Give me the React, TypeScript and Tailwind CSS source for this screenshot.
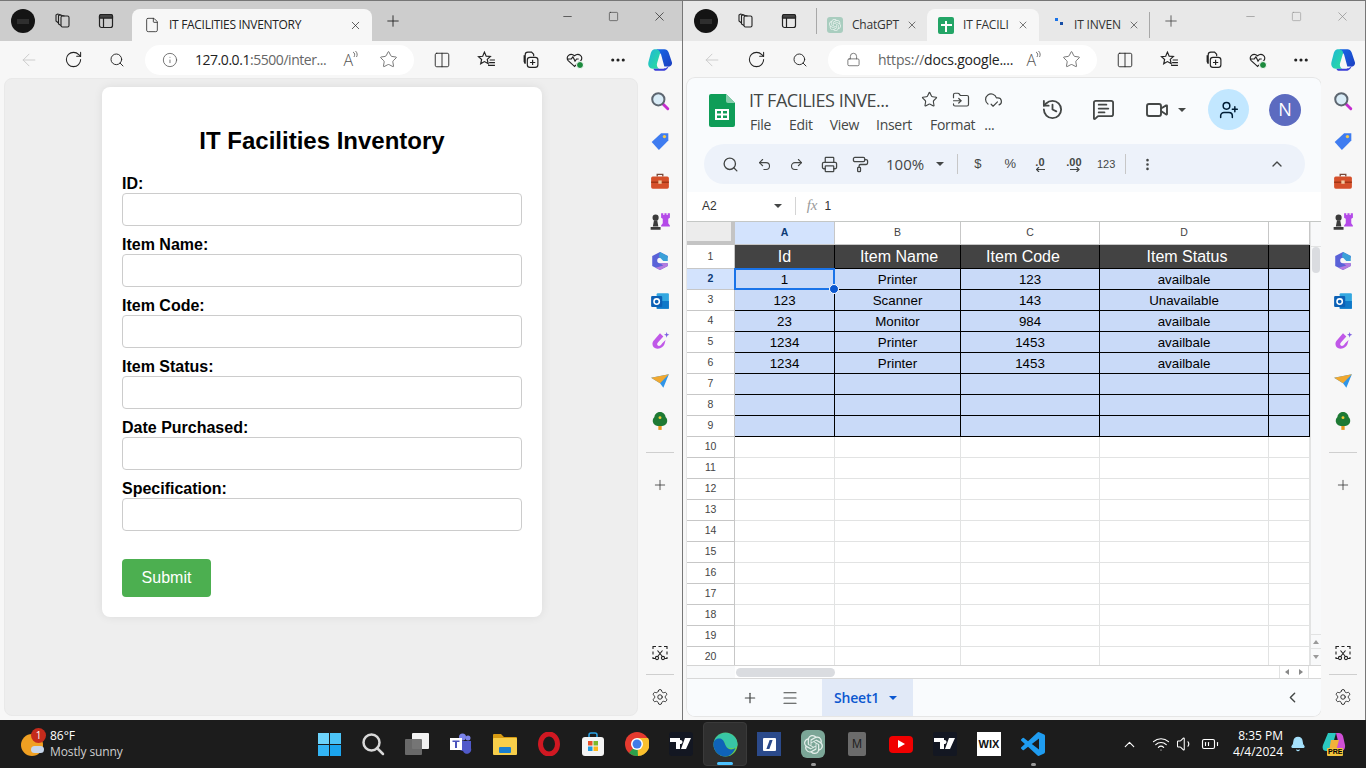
import React from "react";
import {
  ArrowLeft, RotateCw, Search, Info, Lock, Star, X, Plus, Minus, Square, Ellipsis, Columns2,
  Undo2, Redo2, Printer, PaintRoller, History, MessageSquareText, Video, UserPlus, MoreVertical, ChevronUp,
  ChevronLeft, Menu, FolderInput, CloudCheck, Settings, File, Wifi, Volume1, BatteryMedium, Bell,
} from "lucide-react";
import { SiOpenai } from "react-icons/si";

const ui = "font-['Open_Sans','Noto_Sans',sans-serif]";
const arial = "font-['Liberation_Sans',Arial,sans-serif]";

function Avatar() {
  return (
    <div className="w-6 h-6 rounded-full bg-[#141414] flex items-center justify-center ml-[11px]">
      <div className="w-3 h-[5px] bg-[#2e2e2e]" />
    </div>
  );
}

function Workspaces() {
  return (
    <svg width="18" height="18" viewBox="0 0 18 18" fill="none" stroke="#222" strokeWidth="1.1">
      <rect x="7" y="4" width="8" height="11" rx="1.5" />
      <path d="M7 13.5 4.5 12V3.5L5.5 3l5 1M4.5 11 2 9V3l1.5-1 4 1" />
    </svg>
  );
}

function TabsIcon() {
  return (
    <svg width="16" height="16" viewBox="0 0 16 16" fill="none" stroke="#222" strokeWidth="1.2">
      <rect x="1.5" y="1.5" width="13" height="13" rx="2" />
      <path d="M1.5 5h13M5.5 5v9.5" />
      <path d="M1.5 5h13V3a1.5 1.5 0 0 0-1.5-1.5H3A1.5 1.5 0 0 0 1.5 3z" fill="#444" />
    </svg>
  );
}

function SheetsFavicon() {
  return (
    <div className="w-4 h-[17px] rounded-[2px] bg-[#23a566] flex items-center justify-center relative">
      <div className="w-[11px] h-[2px] bg-white" />
      <div className="w-[2px] h-[11px] bg-white absolute top-[4px]" />
    </div>
  );
}

function WinControls({ dim }: { dim?: boolean }) {
  const c = dim ? "#8a8a8a" : "#222";
  return (
    <div className="ml-auto flex h-[28px] items-center">
      <div className="w-[46px] flex justify-center"><Minus size={13} color={c} strokeWidth={1.2} /></div>
      <div className="w-[46px] flex justify-center"><Square size={11} color={c} strokeWidth={1.2} /></div>
      <div className="w-[46px] flex justify-center"><X size={15} color={c} strokeWidth={1.1} /></div>
    </div>
  );
}

function CopilotLogo() {
  return (
    <svg width="26" height="26" viewBox="0 0 24 24">
      <defs>
        <linearGradient id="cp1" x1="0" y1="0" x2="1" y2="1"><stop offset="0" stopColor="#1fb6d8" /><stop offset="1" stopColor="#2be09a" /></linearGradient>
        <linearGradient id="cp2" x1="0" y1="0" x2="1" y2="1"><stop offset="0" stopColor="#1767e8" /><stop offset="1" stopColor="#1d3fc0" /></linearGradient>
      </defs>
      <path d="M9 2h7c2 0 3 1 4 3l3 9c.6 2-1 4-3 4h-4L13 7c-.5-1.6-2-2-4-2z" fill="url(#cp2)" />
      <path d="M8 2C5 2 4 4 3.400 6L1.300 14c-.7 3 1 6 4 6h6c-2-1-2.600-3-2-5L12 6c.4-1.500-1-4-4-4z" fill="url(#cp1)" />
      <path d="M15 22H9c-2 0-3-1-3-2h9c2 0 5-1 6-5-1 4-3 7-6 7z" fill="#3b3fd8" />
    </svg>
  );
}

function Toolbar({ address }: { address: React.ReactNode }) {
  const slot = "w-[44px] flex justify-center items-center";
  return (
    <div className="h-[37px] bg-[#f7f7f7] flex items-center pl-[7px]">
      <div className={slot}><ArrowLeft size={20} color="#c8c8c8" strokeWidth={1.1} /></div>
      <div className={slot}><RotateCw size={19} color="#222" strokeWidth={1.3} /></div>
      <div className={slot}><Search size={16} color="#222" strokeWidth={1.4} /></div>
      <div className="ml-[6px] w-[269px] h-[30px] rounded-full bg-white flex items-center">{address}
        <div className="w-[28px] flex justify-center relative">
          <span className={`${ui} text-[16px] text-[#555] font-light`}>A</span>
          <svg width="6" height="8" viewBox="0 0 6 8" fill="none" stroke="#555" strokeWidth=".8" className="absolute right-[4px] top-[3px]"><path d="M1 1c2 1 2 3 1 5M3.500 0c2 2 2 4 1 6" /></svg>
        </div>
        <div className="w-[52px] flex justify-center"><Star size={19} color="#555" strokeWidth={1} /></div>
      </div>
      <div className={`${slot} ml-[6px]`}><Columns2 size={18} color="#222" strokeWidth={1.2} /></div>
      <div className={slot}>
        <svg width="19" height="19" viewBox="0 0 18 18" fill="none" stroke="#222" strokeWidth="1.1"><path d="M7 2l1.700 3.800 4 .4-3 2.700.9 4L7 11l-3.500 2 .9-4-3-2.700 4-.4zM12 9.500h5M11.500 12h5.500M10.500 14.500h6.500" /></svg>
      </div>
      <div className={slot}>
        <svg width="19" height="19" viewBox="0 0 18 18" fill="none" stroke="#222" strokeWidth="1.1"><path d="M4 13V4.500A2.500 2.500 0 0 1 6.500 2H10l2 2v2M4 13l-1-2V5" /><rect x="6" y="7" width="10" height="9.500" rx="2.500" /><path d="M11 9.300v5M8.500 11.800h5" /></svg>
      </div>
      <div className={`${slot} relative`}>
        <svg width="19" height="19" viewBox="0 0 18 18" fill="none" stroke="#222" strokeWidth="1.1"><path d="M9 15.500 3 10c-3-3.500 2-8 6-4.500C13 2 18 6.500 15 10L9 15.500zM2.500 8.500h3.500l1.500-2 2 4 1.500-2h2" /></svg>
        <div className="absolute w-[8px] h-[8px] rounded-full bg-[#1c8a3d] left-[24px] top-[11px] border border-white" />
      </div>
      <div className={slot}><Ellipsis size={18} color="#222" strokeWidth={2.200} /></div>
      <div className="w-[40px] flex justify-center"><CopilotLogo /></div>
    </div>
  );
}

function SideIcons() {
  const s = "h-[40px] w-full flex items-center justify-center";
  return (
    <>
      <div className={s}>
        <svg width="20" height="20" viewBox="0 0 18 18"><path d="M11 11l5 5" stroke="#c42ccf" strokeWidth="2.600" strokeLinecap="round" /><circle cx="7.500" cy="7.500" r="5.500" fill="#d9ecf7" stroke="#5d6670" strokeWidth="1.800" /></svg>
      </div>
      <div className={s}>
        <svg width="20" height="20" viewBox="0 0 18 18"><path d="M1.500 10 10 2h6.500v6.500L8 17z" fill="#3f7cf0" /><circle cx="13" cy="5" r="1.500" fill="#f4c84a" /></svg>
      </div>
      <div className={s}>
        <svg width="20" height="20" viewBox="0 0 18 18"><path d="M6.500 5V3h5v2" fill="none" stroke="#7a4a3a" strokeWidth="1.200" /><rect x="1" y="5" width="16" height="11" rx="1.500" fill="#d5502a" /><rect x="1" y="9.500" width="16" height="1.200" fill="#9c3414" /><rect x="7.500" y="8.500" width="3" height="3" fill="#f1c9a0" /></svg>
      </div>
      <div className={s}>
        <svg width="22" height="20" viewBox="0 0 20 18"><path d="M11 2h2v1.500h1V2h2v1.500h1V2h2v4l-1.500 1v4l1.500 2v1H11v-1l1.500-2V7L11 6z" fill="#b44ae8" /><circle cx="6" cy="6" r="2.800" fill="#3b3b3b" /><path d="M4.500 8.500h3L8.500 14h-5zM1.500 14.500h9V17h-9z" fill="#3b3b3b" /></svg>
      </div>
      <div className={s}>
        <svg width="20" height="20" viewBox="0 0 18 18"><path d="M9 1 2 4.500v9L9 17l7-3.500V11H9a2.500 2.500 0 0 1 0-5h7V4.500z" fill="#5a62d8" /><path d="M9 11h7v2.500L9 17l-4-2 7-2z" fill="#b57bdf" /><path d="M9 1l7 3.500V9h-4L8 5z" fill="#3aa0d8" /></svg>
      </div>
      <div className={s}>
        <svg width="20" height="20" viewBox="0 0 18 18"><rect x="6" y="2" width="11" height="14" rx="1" fill="#32a7e0" /><path d="M6 9h11v7H6z" fill="#0f78c8" /><rect x="1" y="4.500" width="10" height="10" rx="1" fill="#0b60b5" /><circle cx="6" cy="9.500" r="2.400" fill="none" stroke="#fff" strokeWidth="1.400" /></svg>
      </div>
      <div className={s}>
        <svg width="20" height="20" viewBox="0 0 18 18"><path d="M9 2 3 9c-2 3 0 7 4 7 3 0 5-2 6-4l1-4-3 3c-1 2-3 3-4 2-1-.5-.5-2 .5-3L12 5z" fill="#c058e8" /><path d="M15 1l.6 1.800 1.800.6-1.800.6L15 6l-.6-2-1.800-.6 1.800-.6z" fill="#7a5ce0" /></svg>
      </div>
      <div className={s}>
        <svg width="20" height="20" viewBox="0 0 18 18"><path d="M1 6 17 3l-5 12-3-4z" fill="#2f95e8" /><path d="M1 6l16-3-8 8z" fill="#f0a830" /></svg>
      </div>
      <div className={s}>
        <svg width="20" height="20" viewBox="0 0 18 18"><rect x="7.500" y="12" width="3" height="5" fill="#e89a20" /><path d="M9 1c-3 0-5 2.500-5 4.500C2.500 7 2 9 3 11c1 2 3 2.500 6 2.500s5-.5 6-2.500c1-2 .5-4-1-5.500C14 3.500 12 1 9 1z" fill="#1e7a34" /><circle cx="9" cy="6" r="1.300" fill="#f0c93a" /></svg>
      </div>
    </>
  );
}

function Sidebar() {
  return (
    <div className="flex-1 bg-[#f7f7f7] flex flex-col items-center pt-[3px] pr-[1px]">
      <SideIcons />
      <div className="w-[28px] h-px bg-[#cfcfcf] mt-[11px]" />
      <div className="h-[64px] flex items-center"><Plus size={16} color="#333" strokeWidth={1.2} /></div>
      <div className="mt-auto flex flex-col items-center pb-[14px]">
        <svg width="18" height="18" viewBox="0 0 18 18" fill="none" stroke="#222" strokeWidth="1.100" className="mb-[12px]"><path d="M2 5V2.500h3M7.500 2.500h3M13 2.500h3V5M2 7.500v3M16 7.500v3M2 13v1.500h2M14 14.500h2V13" /><path d="M6.500 6.500 11 12M11.500 6.500 7 12" /><circle cx="6" cy="14" r="1.600" /><circle cx="12" cy="14" r="1.600" /></svg>
        <div className="w-[28px] h-px bg-[#cfcfcf] mb-[13px]" />
        <Settings size={18} color="#222" strokeWidth={1.2} />
      </div>
    </div>
  );
}

function LeftTabs() {
  return (
    <div className="h-[40px] bg-[#cdcdcd] flex items-end">
      <div className="h-full flex items-center">
        <Avatar />
        <div className="w-[39px] ml-[8px] flex justify-center"><Workspaces /></div>
        <div className="w-[44px] ml-[2px] flex justify-center"><TabsIcon /></div>
      </div>
      <div className="ml-[4px] w-[240px] h-[32px] bg-[#f7f7f7] rounded-t-[8px] flex items-center pl-[12px]">
        <File size={16} color="#222" strokeWidth={1.2} />
        <span className={`${ui} ml-[9px] text-[12px] text-[#222] tracking-[-0.3px]`}>IT FACILITIES INVENTORY</span>
        <X size={13} color="#222" strokeWidth={1.3} className="ml-auto mr-[10px]" />
      </div>
      <div className="h-full flex-1 flex items-center">
        <Plus size={18} color="#222" strokeWidth={1.2} className="ml-[12px]" />
        <div className="ml-auto self-start pt-[1px]"><WinControls /></div>
      </div>
    </div>
  );
}

function RightTabs() {
  const label = `${ui} text-[12px] text-[#333] tracking-[-0.2px]`;
  return (
    <div className="h-[40px] bg-[#e8e8e8] flex items-end">
      <div className="h-full flex items-center">
        <Avatar />
        <div className="w-[39px] ml-[8px] flex justify-center"><Workspaces /></div>
        <div className="w-[44px] ml-[2px] flex justify-center"><TabsIcon /></div>
        <div className="ml-[5px] w-px h-[26px] bg-[#a8a8a8]" />
      </div>
      <div className="h-[32px] w-[110px] flex items-center pl-[10px]">
        <div className="w-4 h-4 rounded-[3px] bg-[#a9cdbf] flex items-center justify-center"><SiOpenai size={12} color="#e8f2ee" /></div>
        <span className={`${label} ml-[9px]`}>ChatGPT</span>
        <X size={12} color="#333" strokeWidth={1.3} className="ml-[7px]" />
      </div>
      <div className="h-[32px] w-[112px] bg-[#f7f7f7] rounded-t-[8px] flex items-center pl-[11px]">
        <SheetsFavicon />
        <span className={`${label} ml-[9px] w-[47px] whitespace-nowrap`}>IT FACILI</span>
        <X size={12} color="#333" strokeWidth={1.3} className="ml-[7px]" />
      </div>
      <div className="h-[32px] w-[111px] shrink-0 flex items-center pl-[14px]">
        <div className="w-4 h-4 relative shrink-0">
          <div className="absolute w-[3px] h-[3px] bg-[#1a73e8] left-[2px] top-[1px]" />
          <div className="absolute w-[3px] h-[3px] bg-[#174ea6] left-[7px] top-[5px]" />
        </div>
        <span className={`${label} ml-[5px] w-[52px] shrink-0 whitespace-nowrap`}>IT INVEN</span>
        <X size={12} color="#333" strokeWidth={1.3} className="ml-[2px] shrink-0" />
        <div className="ml-[9px] w-px h-[26px] bg-[#a8a8a8] shrink-0" />
      </div>
      <div className="h-full flex-1 flex items-center">
        <Plus size={18} color="#444" strokeWidth={1.1} className="ml-[12px]" />
        <div className="ml-auto self-start pt-[1px]"><WinControls dim /></div>
      </div>
    </div>
  );
}

function Field({ label }: { label: string }) {
  return (
    <div className="mb-[9px]">
      <div className={`${arial} text-[16px] leading-[19px] font-bold text-black`}>{label}</div>
      <div className="h-[33px] w-[400px] bg-white border border-[#cccccc] rounded-[4px]" />
    </div>
  );
}

function FormPanel() {
  return (
    <div className="w-[634px] ml-[4px] h-[638px] bg-[#eeeeee] rounded-[8px] border border-[#e9e9e9] pt-[8px] pl-[97px]">
      <div className="w-[440px] h-[530px] bg-white rounded-[8px] shadow-[0_0_10px_rgba(0,0,0,0.08)] pt-[40px] px-[20px]">
        <div className={`${arial} text-[24px] leading-[27px] font-bold text-center text-black mb-[20px]`}>IT Facilities Inventory</div>
        {["ID:", "Item Name:", "Item Code:", "Item Status:", "Date Purchased:", "Specification:"].map((l) => <Field key={l} label={l} />)}
        <div className={`${arial} mt-[28px] w-[89px] h-[38px] bg-[#4caf50] rounded-[4px] text-white text-[16px] flex items-center justify-center`}>Submit</div>
      </div>
    </div>
  );
}

function SheetsHeader() {
  const menu = `${ui} text-[14px] text-[#444746] tracking-[-0.3px]`;
  return (
    <div className="h-[66px] flex items-start">
      <svg width="26" height="33" viewBox="0 0 26 33" className="ml-[22px] mt-[16px]">
        <path d="M2 0h15l9 9v22a2 2 0 0 1-2 2H2a2 2 0 0 1-2-2V2a2 2 0 0 1 2-2z" fill="#0f9d58" />
        <path d="M17 0l9 9h-7a2 2 0 0 1-2-2z" fill="#87ceac" />
        <path d="M6 15h14v11H6zM8 17v2.500h4V17zm6 0v2.500h4V17zm-6 4.500V24h4v-2.500zm6 0V24h4v-2.500z" fill="#fff" fillRule="evenodd" />
      </svg>
      <div className="ml-[14px] mt-[10px] w-[170px]">
        <div className={`${ui} text-[18px] leading-[24px] text-[#444746] tracking-[-0.5px] whitespace-nowrap`}>IT FACILIES INVE...</div>
        <div className="flex mt-[3px] leading-[20px] whitespace-nowrap">
          <span className={`${menu} ml-px`}>File</span>
          <span className={`${menu} ml-[18px]`}>Edit</span>
          <span className={`${menu} ml-[17px]`}>View</span>
          <span className={`${menu} ml-[17px]`}>Insert</span>
          <span className={`${menu} ml-[18px]`}>Format</span>
          <span className={`${menu} ml-[9px]`}>...</span>
        </div>
      </div>
      <div className="flex items-center mt-[12px]">
        <Star size={17} color="#444746" strokeWidth={1.6} className="ml-[2px]" />
        <FolderInput size={18} color="#444746" strokeWidth={1.6} className="ml-[14px]" />
        <CloudCheck size={19} color="#444746" strokeWidth={1.5} className="ml-[14px]" />
      </div>
      <div className="flex items-center mt-[11px] h-[41px]">
        <History size={23} color="#444746" strokeWidth={1.9} className="ml-[38px]" />
        <MessageSquareText size={23} color="#444746" strokeWidth={1.9} className="ml-[28px]" />
        <Video size={24} color="#444746" strokeWidth={1.9} className="ml-[30px]" />
        <div className="ml-[9px] w-0 h-0 border-x-[4px] border-x-transparent border-t-[4px] border-t-[#444746]" />
        <div className="ml-[22px] w-[41px] h-[41px] rounded-full bg-[#c2e7ff] flex items-center justify-center"><UserPlus size={20} color="#001d35" strokeWidth={1.8} /></div>
        <div className={`${ui} ml-[20px] w-8 h-8 rounded-full bg-[#5c6bc0] text-white text-[18px] flex items-center justify-center`}>N</div>
      </div>
    </div>
  );
}

function Caret({ className }: { className?: string }) {
  return <div className={`w-0 h-0 border-x-[4px] border-x-transparent border-t-[4px] border-t-[#444746] ${className ?? ""}`} />;
}

function SheetsToolbar() {
  const t = `${arial} text-[#444746]`;
  return (
    <div className="ml-[17px] w-[601px] h-[40px] rounded-full bg-[#edf2fa] flex items-center">
      <Search size={17} color="#444746" strokeWidth={1.9} className="ml-[18px]" />
      <Undo2 size={15} color="#444746" strokeWidth={1.7} className="ml-[18px]" />
      <Redo2 size={15} color="#444746" strokeWidth={1.7} className="ml-[17px]" />
      <Printer size={17} color="#444746" strokeWidth={1.8} className="ml-[17px]" />
      <PaintRoller size={17} color="#444746" strokeWidth={1.8} className="ml-[14px]" />
      <span className={`${ui} text-[15px] text-[#444746] ml-[17px]`}>100%</span>
      <Caret className="ml-[12px]" />
      <div className="ml-[13px] w-px h-[20px] bg-[#c7c7c7]" />
      <span className={`${t} text-[13px] ml-[16px]`}>$</span>
      <span className={`${t} text-[13px] ml-[23px]`}>%</span>
      <div className="ml-[15px] w-[18px] flex flex-col items-center leading-none">
        <span className={`${t} text-[11px] font-bold leading-[10px]`}>.0</span>
        <svg width="10" height="5" viewBox="0 0 10 5" className="ml-[3px]"><path d="M0 2.500h9M3 0 .5 2.500 3 5" stroke="#444746" fill="none" strokeWidth="1.200" /></svg>
      </div>
      <div className="ml-[13px] w-[24px] flex flex-col items-center leading-none">
        <span className={`${t} text-[11px] font-bold leading-[10px]`}>.00</span>
        <svg width="10" height="5" viewBox="0 0 10 5" className="ml-[3px]"><path d="M0 2.500h9M6.500 0 9 2.500 6.500 5" stroke="#444746" fill="none" strokeWidth="1.200" /></svg>
      </div>
      <span className={`${t} text-[11px] ml-[11px]`}>123</span>
      <div className="ml-[10px] w-px h-[20px] bg-[#c7c7c7]" />
      <MoreVertical size={15} color="#444746" strokeWidth={2.2} className="ml-[14px]" />
      <ChevronUp size={16} color="#444746" strokeWidth={2} className="ml-auto mr-[20px]" />
    </div>
  );
}

function FormulaBar() {
  return (
    <div className="h-[29px] bg-white flex items-center mt-[8px] pb-[2px]">
      <span className={`${arial} text-[12px] text-[#333] ml-[15px]`}>A2</span>
      <Caret className="ml-[57px]" />
      <div className="ml-[13px] w-px h-[18px] bg-[#d4d4d4]" />
      <span className="font-['Liberation_Serif',serif] italic text-[15px] text-[#9a9a9a] ml-[11px]">fx</span>
      <span className={`${arial} text-[12px] text-[#333] ml-[7px]`}>1</span>
    </div>
  );
}

const rows: string[][] = [
  ["1", "Printer", "123", "availbale"],
  ["123", "Scanner", "143", "Unavailable"],
  ["23", "Monitor", "984", "availbale"],
  ["1234", "Printer", "1453", "availbale"],
  ["1234", "Printer", "1453", "availbale"],
  ["", "", "", ""],
  ["", "", "", ""],
  ["", "", "", ""],
];

function RowHead({ n, sel, tall }: { n: number; sel?: boolean; tall?: boolean }) {
  return (
    <div className={`${arial} ${tall ? "h-[24px]" : "h-[21px]"} ${sel ? "bg-[#d3e3fd] font-bold text-[#0b3a75]" : "bg-white text-[#444]"} border-r border-b border-[#c7c7c7] text-[10.500px] flex items-center justify-center`}>
      {n}
    </div>
  );
}

function Grid() {
  const widths = ["w-[100px]", "w-[126px]", "w-[139px]", "w-[169px]", "w-[41px]"];
  const heads = ["A", "B", "C", "D", ""];
  const hdr = ["Id", "Item Name", "Item Code", "Item Status", ""];
  const hdrPad = ["", "pl-[3px]", "pr-[14px]", "pl-[6px]", ""];
  return (
    <div className="h-[444px] overflow-hidden flex border-t border-[#c4c7c5]">
      <div className="w-[623px] shrink-0">
        <div className="flex h-[23px]">
          <div className="w-[48px] bg-[#ececec] border-r-[4px] border-b-[4px] border-[#c4c4c4]" />
          {heads.map((h, i) => (
            <div key={i} className={`${widths[i]} ${arial} ${i === 0 ? "bg-[#d3e3fd] font-bold text-[#0b3a75]" : "bg-white text-[#444]"} border-r border-b border-[#c7c7c7] text-[10.500px] flex items-center justify-center`}>{h}</div>
          ))}
        </div>
        <div className="flex h-[24px]">
          <div className="w-[48px]"><RowHead n={1} tall /></div>
          {hdr.map((h, i) => (
            <div key={i} className={`${widths[i]} ${hdrPad[i]} ${arial} bg-[#434343] text-white text-[16px] border-r border-b border-black flex items-center justify-center`}>{h}</div>
          ))}
        </div>
        {rows.map((r, ri) => (
          <div key={ri} className="flex h-[21px]">
            <div className="w-[48px]"><RowHead n={ri + 2} sel={ri === 0} /></div>
            {[...r, ""].map((c, i) => (
              <div key={i} className={`${widths[i]} ${arial} ${ri === 0 && i === 0 ? "z-10" : ""} relative bg-[#c9daf8] text-black text-[13.330px] pt-[2px] border-r border-b border-black flex items-center justify-center`}>
                {c}
                {ri === 0 && i === 0 && (
                  <div className="absolute -left-px -top-px w-[101px] h-[22px] border-2 border-[#1a73e8]">
                    <div className="absolute -right-[6px] -bottom-[6px] w-[10px] h-[10px] rounded-full bg-[#0b57d0] border border-white" />
                  </div>
                )}
              </div>
            ))}
          </div>
        ))}
        {Array.from({ length: 11 }).map((_, ri) => (
          <div key={ri} className="flex h-[21px]">
            <div className="w-[48px]"><RowHead n={ri + 10} /></div>
            {widths.map((w, i) => <div key={i} className={`${w} bg-white border-r border-b border-[#e2e3e3]`} />)}
          </div>
        ))}
      </div>
      <div className="w-[11px] bg-[#f8f9fa] border-l border-[#e2e3e3] flex flex-col">
        <div className="h-[25px] shrink-0 border-b border-[#e2e3e3]" />
        <div className="w-[8px] h-[26px] ml-px bg-[#dadce0] rounded-[4px]" />
        <div className="mt-auto h-[15px] flex items-center justify-center border-y border-[#e2e3e3]"><div className="w-0 h-0 border-x-[3px] border-x-transparent border-b-[4px] border-b-[#9a9a9a]" /></div>
        <div className="h-[16px] flex items-center justify-center"><div className="w-0 h-0 border-x-[3px] border-x-transparent border-t-[4px] border-t-[#9a9a9a]" /></div>
      </div>
    </div>
  );
}

function SheetsBottom() {
  return (
    <>
      <div className="h-[13px] bg-white border-t border-[#d4d4d4] flex items-center">
        <div className="w-[48px] h-full bg-[#f8f9fa]" />
        <div className="ml-[1px] w-[99px] h-[9px] rounded-full bg-[#dadce0]" />
        <div className="ml-auto w-[30px] h-full border-x border-[#e2e3e3] flex items-center justify-around mr-[12px]">
          <div className="w-0 h-0 border-y-[3px] border-y-transparent border-r-[4px] border-r-[#888]" />
          <div className="w-0 h-0 border-y-[3px] border-y-transparent border-l-[4px] border-l-[#888]" />
        </div>
      </div>
      <div className="flex-1 bg-[#f9fbfd] border-t border-[#d8d8d8] flex items-stretch">
        <Plus size={16} color="#444746" strokeWidth={1.8} className="ml-[55px] self-center" />
        <Menu size={18} color="#444746" strokeWidth={1.6} className="ml-[23px] self-center" />
        <div className={`${ui} ml-[23px] w-[91px] bg-[#e1e9f7] text-[#0b57d0] text-[14px] font-semibold flex items-center pl-[12px] tracking-[-0.2px]`}>
          Sheet1
          <Caret className="ml-[10px] !border-t-[#0b57d0]" />
        </div>
        <ChevronLeft size={17} color="#444746" strokeWidth={2} className="ml-[371px] self-center" />
      </div>
    </>
  );
}

function SheetsPanel() {
  return (
    <div className="w-[634px] ml-[4px] h-[638px] rounded-[8px] overflow-hidden bg-[#f9fbfd] shadow-[0_0_0_1px_#e6e6e6] flex flex-col">
      <SheetsHeader />
      <SheetsToolbar />
      <FormulaBar />
      <Grid />
      <SheetsBottom />
    </div>
  );
}

function Window({ tabs, address, panel }: { tabs: React.ReactNode; address: React.ReactNode; panel: React.ReactNode }) {
  return (
    <div className="w-[683px] h-[720px] border-t border-[#767676] bg-[#f7f7f7] border-r border-r-[#777] flex flex-col overflow-hidden">
      {tabs}
      <Toolbar address={address} />
      <div className="flex flex-1">
        {panel}
        <Sidebar />
      </div>
    </div>
  );
}

function TvLogo({ w = 22 }: { w?: number }) {
  return (
    <svg width={w} height="14" viewBox="0 0 22 14" fill="#fff"><path d="M0 1h10v11H6V5H0zM12.500 5a2 2 0 1 1 0-.01zM15 1h6l-5 11h-5z" /></svg>
  );
}

function TaskIcon({ children, dot, active }: { children: React.ReactNode; dot?: boolean; active?: boolean }) {
  return (
    <div className={`w-[44px] h-[44px] flex items-center justify-center relative rounded-[4px] ${active ? "bg-[#2f2f2f] border border-[#3a3a3a]" : ""}`}>
      {children}
      {dot && <div className="absolute bottom-0 w-[5px] h-[3px] rounded-full bg-[#9a9a9a]" />}
      {active && <div className="absolute bottom-0 w-[16px] h-[3px] rounded-full bg-[#4cc2ff]" />}
    </div>
  );
}

function Taskbar() {
  return (
    <div className="h-[48px] bg-[#1c1c1c] flex items-center">
      <div className="w-[307px] shrink-0 flex items-center">
        <div className="ml-[21px] relative w-[24px] h-[24px]">
          <div className="w-[22px] h-[22px] rounded-full bg-[#f0a022] mt-[2px]" />
          <div className="absolute right-[1px] bottom-[3px] w-[13px] h-[7px] rounded-full bg-[#c7d6ea]" />
          <div className={`${ui} absolute left-[10px] -top-[4px] w-[15px] h-[15px] rounded-full bg-[#c42b1c] text-white text-[10px] flex items-center justify-center`}>1</div>
        </div>
        <div className={`${ui} ml-[5px] leading-[16px] text-[12px] text-white`}>
          <div>86°F</div>
          <div className="text-[#cfcfcf] tracking-[-0.1px]">Mostly sunny</div>
        </div>
      </div>
      <div className="flex items-center">
        <TaskIcon>
          <div className="grid grid-cols-2 gap-[1px] w-[23px] h-[23px]">
            <div className="bg-[#6cd3fb]" /><div className="bg-[#4cc4f8]" /><div className="bg-[#33b5f5]" /><div className="bg-[#1ba5ef]" />
          </div>
        </TaskIcon>
        <TaskIcon>
          <svg width="24" height="24" viewBox="0 0 24 24" fill="none"><circle cx="10.500" cy="10.500" r="8" stroke="#d8d8d8" strokeWidth="2.500" /><path d="M16 16l6 6" stroke="#d8d8d8" strokeWidth="2.500" strokeLinecap="round" /></svg>
        </TaskIcon>
        <TaskIcon>
          <div className="relative w-[24px] h-[22px]">
            <div className="absolute right-0 top-0 w-[17px] h-[16px] bg-[#f2f2f2] rounded-[1px]" />
            <div className="absolute left-0 bottom-0 w-[17px] h-[16px] bg-[#6e6e6e]/95 rounded-[1px]" />
          </div>
        </TaskIcon>
        <TaskIcon>
          <svg width="24" height="24" viewBox="0 0 24 24"><circle cx="19" cy="6" r="2.500" fill="#7b83eb" /><circle cx="13.500" cy="5" r="3.500" fill="#7b83eb" /><path d="M9 9h13v7a4 4 0 0 1-8 3c-3 0-5-3-5-6z" fill="#5059c9" /><rect x="1" y="6" width="12" height="12" fill="#fff" /><path d="M3.500 8.500h7V10H8v6H6v-6H3.500z" fill="#4b53bc" /></svg>
        </TaskIcon>
        <TaskIcon>
          <svg width="24" height="22" viewBox="0 0 24 22"><path d="M0 2a1 1 0 0 1 1-1h7l3 3h12a1 1 0 0 1 1 1v2H0z" fill="#d69a12" /><rect x="0" y="5" width="24" height="17" rx="1" fill="#f7ce4a" /><rect x="6" y="14" width="12" height="6" rx="1" fill="#1a7fd0" /></svg>
        </TaskIcon>
        <TaskIcon>
          <svg width="22" height="24" viewBox="0 0 22 24"><ellipse cx="11" cy="12" rx="8.500" ry="10" fill="none" stroke="#d01822" strokeWidth="5" /></svg>
        </TaskIcon>
        <TaskIcon>
          <svg width="22" height="24" viewBox="0 0 22 24"><path d="M7 6V3a2 2 0 0 1 2-2h4a2 2 0 0 1 2 2v3" fill="none" stroke="#2aa3e6" strokeWidth="1.500" /><rect x="0" y="5" width="22" height="19" rx="3" fill="#f4f4f4" /><rect x="6" y="9" width="4.500" height="4.500" fill="#e8502a" /><rect x="11.500" y="9" width="4.500" height="4.500" fill="#7cb82a" /><rect x="6" y="14.500" width="4.500" height="4.500" fill="#1e9ae0" /><rect x="11.500" y="14.500" width="4.500" height="4.500" fill="#fbb81a" /></svg>
        </TaskIcon>
        <TaskIcon>
          <svg width="24" height="24" viewBox="0 0 24 24"><circle cx="12" cy="12" r="12" fill="#e53a2f" /><path d="M12 12 22.400 18A12 12 0 0 1 4 21z" fill="#2ba14b" /><path d="M12 6h11a12 12 0 0 1-10 18z" fill="#fbc02d" /><circle cx="12" cy="12" r="6" fill="#fff" /><circle cx="12" cy="12" r="4.500" fill="#3f7be8" /></svg>
        </TaskIcon>
        <TaskIcon>
          <div className="w-[24px] h-[24px] rounded-[3px] bg-[#131722] flex items-center justify-center"><TvLogo /></div>
        </TaskIcon>
        <TaskIcon active>
          <svg width="25" height="25" viewBox="0 0 25 25"><defs><linearGradient id="eg" x1="0" y1="0" x2="1" y2="1"><stop offset="0" stopColor="#36c7a0" /><stop offset="1" stopColor="#75d23c" /></linearGradient></defs><circle cx="12.500" cy="12.500" r="12" fill="url(#eg)" /><path d="M1 11C3 3 10 .5 15 1.500c6 1 9.500 6 9.500 11 0 3-3 3.500-6 3.500-4 0-6-1-6-3.500 0-3-3-4.500-6-3.500S2 10 1 11z" fill="#38c6a6" /><path d="M.5 12.500C.5 6.500 6 6 8.500 7c3 1.500 3 5 5 8 2 3 6 3 9 1-2 5-6 8.500-10.500 8.500C6 24.500.5 19 .5 12.500z" fill="#0f63b8" /></svg>
        </TaskIcon>
        <TaskIcon>
          <div className="w-[24px] h-[24px] bg-[#2b4a8b] flex items-center justify-center">
            <div className="w-[13px] h-[13px] bg-white rounded-[1px] flex items-center justify-center"><div className="w-[3px] h-[9px] bg-[#2b4a8b] skew-x-[-20deg]" /></div>
          </div>
        </TaskIcon>
        <TaskIcon dot>
          <div className="w-[24px] h-[28px] rounded-[6px] bg-[#7ba697] flex items-center justify-center"><SiOpenai size={19} color="#e5efeb" /></div>
        </TaskIcon>
        <TaskIcon>
          <div className={`${arial} w-[18px] h-[24px] rounded-[2px] bg-[#6b6b6b] text-[#222] text-[12px] flex items-center justify-center`}>M</div>
        </TaskIcon>
        <TaskIcon>
          <div className="w-[24px] h-[17px] rounded-[4px] bg-[#f00000] flex items-center justify-center">
            <div className="w-0 h-0 border-y-[4px] border-y-transparent border-l-[7px] border-l-white" />
          </div>
        </TaskIcon>
        <TaskIcon>
          <div className="w-[24px] h-[24px] rounded-[2px] bg-[#131722] flex items-center justify-center"><TvLogo /></div>
        </TaskIcon>
        <TaskIcon>
          <div className={`${arial} w-[24px] h-[24px] bg-white text-[#111] text-[11px] font-bold flex items-center justify-center`}>WIX</div>
        </TaskIcon>
        <TaskIcon dot>
          <svg width="24" height="24" viewBox="0 0 24 24" fill="#1f9cf0"><path d="M23.150 2.587L18.210.21a1.494 1.494 0 0 0-1.705.29l-9.460 8.630-4.120-3.128a.999.999 0 0 0-1.276.057L.327 7.261A1 1 0 0 0 .326 8.740L3.899 12 .326 15.260a1 1 0 0 0 .001 1.479L1.650 17.940a.999.999 0 0 0 1.276.057l4.120-3.128 9.460 8.630a1.492 1.492 0 0 0 1.704.29l4.942-2.377A1.500 1.500 0 0 0 24 20.060V3.939a1.500 1.500 0 0 0-.85-1.352zm-5.146 14.861L10.826 12l7.178-5.448v10.896z" /></svg>
        </TaskIcon>
      </div>
      <div className="flex items-center flex-1">
        <ChevronUp size={17} color="#fff" strokeWidth={1.6} className="ml-[66px]" />
        <Wifi size={18} color="#fff" strokeWidth={1.6} className="ml-[14px]" />
        <Volume1 size={18} color="#fff" strokeWidth={1.4} className="ml-[6px]" />
        <BatteryMedium size={18} color="#fff" strokeWidth={1.5} className="ml-[7px]" />
        <div className={`${ui} ml-[10px] w-[54px] text-right text-[12px] leading-[16px] text-white`}>
          <div>8:35 PM</div>
          <div>4/4/2024</div>
        </div>
        <Bell size={16} color="#a5e0fb" fill="#a5e0fb" className="ml-[7px]" />
        <div className="ml-[16px] relative w-[24px] h-[24px]">
          <svg width="24" height="22" viewBox="0 0 24 22"><path d="M6 1h8l-5 18H4C1 19 0 16 1 13z" fill="#2bc8c0" /><path d="M14 1h3c2 0 3 1 4 3l2 9c.5 3-1 6-4 6h-6l3-10z" fill="#d04fd6" /><path d="M9 8h8l-3 11H7z" fill="#f2b13a" /></svg>
          <div className={`${arial} absolute left-[5px] bottom-0 bg-[#f3c33c] text-black text-[7px] leading-[8px] font-bold px-[1px] rounded-[1px]`}>PRE</div>
        </div>
      </div>
    </div>
  );
}

export default function App() {
  const leftAddr = (
    <>
      <Info size={16} color="#555" strokeWidth={1.2} className="ml-[17px]" />
      <span className={`${ui} ml-[17px] w-[140px] text-[14px] tracking-[-0.45px] text-[#666] whitespace-nowrap`}><span className="text-[#222]">127.0.0.1</span>:5500/inter...</span>
    </>
  );
  const rightAddr = (
    <>
      <Lock size={15} color="#555" strokeWidth={1.2} className="ml-[18px]" />
      <span className={`${ui} ml-[17px] w-[140px] text-[14px] tracking-[-0.2px] text-[#666] whitespace-nowrap`}>https://<span className="text-[#222]">docs.google....</span></span>
    </>
  );
  return (
    <div className="w-[1366px] h-[768px] overflow-hidden bg-[#1c1c1c] flex flex-col">
      <div className="flex">
        <Window tabs={<LeftTabs />} address={leftAddr} panel={<FormPanel />} />
        <Window tabs={<RightTabs />} address={rightAddr} panel={<SheetsPanel />} />
      </div>
      <Taskbar />
    </div>
  );
}
